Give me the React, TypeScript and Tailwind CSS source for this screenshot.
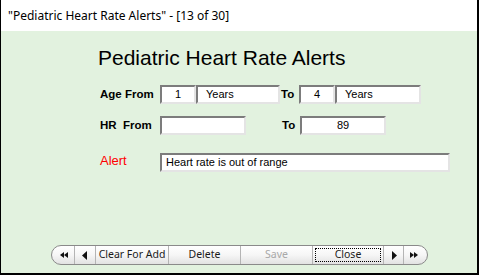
import React from "react";

const arial = { fontFamily: '"Liberation Sans", Arial, sans-serif' };

function Box({ w, text, align = "left", pl = 0 }: { w: number; text?: string; align?: "left" | "center"; pl?: number }) {
  return (
    <div
      className="h-[19px] bg-white border-2 border-t-[#7c7c7c] border-l-[#7c7c7c] border-b-[#e4e4e4] border-r-[#e4e4e4] flex items-center text-[11px] text-black leading-none"
      style={{ width: w, justifyContent: align === "center" ? "center" : "flex-start", paddingLeft: pl }}
    >
      {text}
    </div>
  );
}

function Tri({ dir, double }: { dir: "l" | "r"; double?: boolean }) {
  if (double) {
    return (
      <svg width="9" height="6" viewBox="0 0 9 6">
        {dir === "l" ? (
          <>
            <polygon points="0,3 4,0 4,6" fill="#111" />
            <polygon points="4,3 8,0 8,6" fill="#111" />
          </>
        ) : (
          <>
            <polygon points="1,0 5,3 1,6" fill="#111" />
            <polygon points="5,0 9,3 5,6" fill="#111" />
          </>
        )}
      </svg>
    );
  }
  return (
    <svg width="6" height="9" viewBox="0 0 6 9">
      {dir === "l" ? <polygon points="0,4.5 5,0 5,9" fill="#111" /> : <polygon points="1,0 6,4.5 1,9" fill="#111" />}
    </svg>
  );
}

export default function App() {
  const seg = "h-full flex items-center justify-center border-r border-[#b4b4b4]";
  return (
    <div className="w-[479px] h-[275px] bg-white border-l border-r-2 border-b-2 border-black flex flex-col overflow-hidden">
      <div className="h-[31px] flex items-center pl-[7px] text-[12px] text-black" style={{ fontFamily: '"Noto Sans", sans-serif' }}>
        "Pediatric Heart Rate Alerts" - [13 of 30]
      </div>
      <div className="flex-1 bg-[#e2f2df] flex flex-col" style={arial}>
        <div className="mt-[15px] h-[24px] leading-[24px] text-[21px] text-black pl-[97px]">Pediatric Heart Rate Alerts</div>

        <div className="mt-[15px] flex items-center pl-[159px] relative">
          <div className="absolute left-[99px] text-[11.5px] font-bold text-black">Age From</div>
          <Box w={36} text="1" align="center" />
          <Box w={84} text="Years" pl={8} />
          <div className="w-[19px] pl-[1px] text-[11.5px] font-bold text-black">To</div>
          <Box w={36} text="4" align="center" />
          <Box w={86} text="Years" pl={8} />
        </div>

        <div className="mt-[12px] flex items-center pl-[159px] relative">
          <div className="absolute left-[99px] text-[11.5px] font-bold text-black whitespace-pre">HR  From</div>
          <Box w={86} />
          <div className="w-[35px]" />
          <div className="w-[19px] pl-[1px] text-[11.5px] font-bold text-black">To</div>
          <Box w={86} text="89" align="center" />
        </div>

        <div className="mt-[18px] flex items-center pl-[159px] relative">
          <div className="absolute left-[99px] -top-[2px] text-[13px] text-[#ff0000]">Alert</div>
          <Box w={290} text="Heart rate is out of range" pl={4} />
        </div>

        <div className="mt-[73px] pl-[50px] flex">
          <div
            className="h-[20px] flex border border-[#8a8a8a] rounded-full overflow-hidden bg-gradient-to-b from-white via-[#f6f6f6] to-[#e2e2e2] text-[10.5px] text-[#1a1a1a]"
            style={{ fontFamily: '"Noto Sans", sans-serif' }}
          >
            <div className={`${seg} w-[23px] pl-[3px]`}><Tri dir="l" double /></div>
            <div className={`${seg} w-[21px]`}><Tri dir="l" /></div>
            <div className={`${seg} w-[73px]`}>Clear For Add</div>
            <div className={`${seg} w-[72px]`}>Delete</div>
            <div className={`${seg} w-[72px] text-[#a8a8a8]`}>Save</div>
            <div className={`${seg} w-[71px] p-[2px]`}>
              <div className="w-full h-full border border-dotted border-black flex items-center justify-center">Close</div>
            </div>
            <div className={`${seg} w-[20px]`}><Tri dir="r" /></div>
            <div className="h-full flex items-center justify-center w-[23px] pr-[4px]"><Tri dir="r" double /></div>
          </div>
        </div>
      </div>
    </div>
  );
}
